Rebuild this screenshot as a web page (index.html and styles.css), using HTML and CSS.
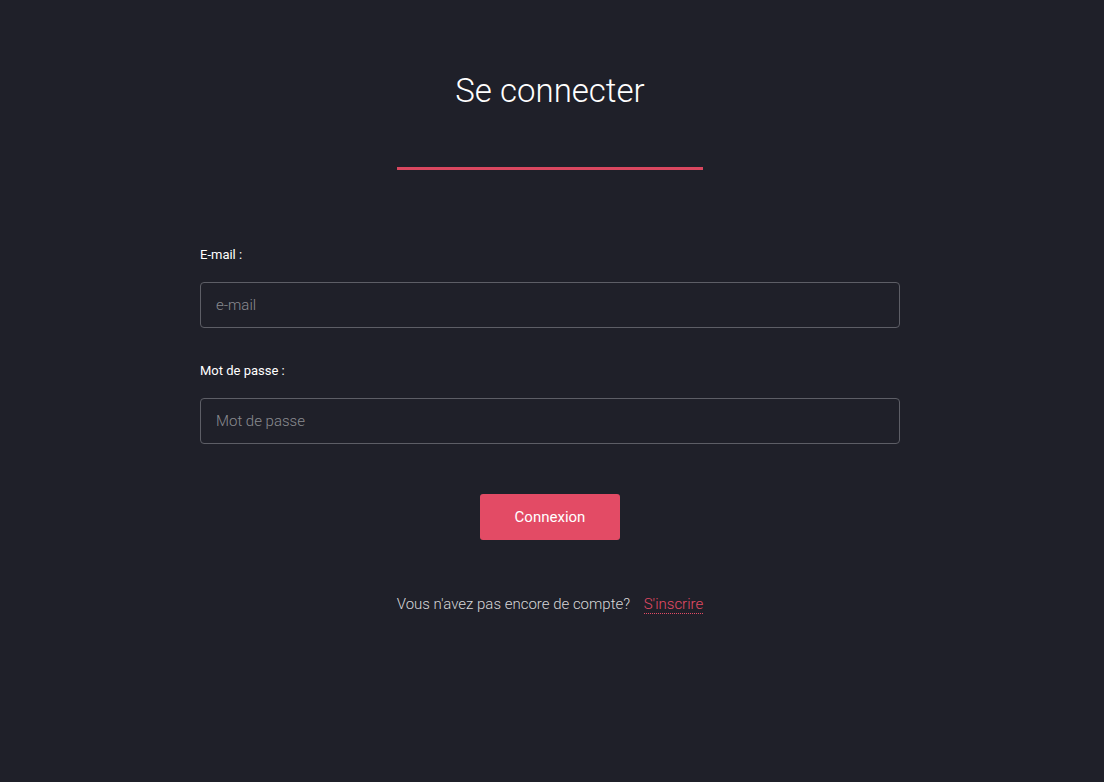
FILE: index.html
```html
<!DOCTYPE html>
<html lang="fr">
<head>
<meta charset="utf-8">
<title>Se connecter</title>
<link rel="stylesheet" href="styles.css">
</head>
<body>
<main class="page">
  <h1 class="title">Se connecter</h1>
  <div class="divider"></div>
  <form class="form">
    <div class="field">
      <label class="label" for="email">E-mail :</label>
      <input class="input" id="email" type="text" placeholder="e-mail">
    </div>
    <div class="field">
      <label class="label" for="pwd">Mot de passe :</label>
      <input class="input" id="pwd" type="password" placeholder="Mot de passe">
    </div>
    <div class="actions">
      <button class="btn" type="button">Connexion</button>
    </div>
  </form>
  <p class="signup">Vous n'avez pas encore de compte? <a class="signup-link" href="#">S'inscrire</a></p>
</main>
</body>
</html>
```
FILE: styles.css
```css
html, body {
  margin: 0;
  padding: 0;
  background: #1f2029;
  height: 100%;
}
body {
  font-family: Roboto, "Liberation Sans", sans-serif;
  color: #ffffff;
}
.page {
  display: flex;
  flex-direction: column;
  align-items: center;
  padding-top: 70px;
  padding-right: 4px;
}
.title {
  margin: 0;
  font-weight: 300;
  font-size: 33px;
  line-height: 42px;
  color: #ffffff;
}
.divider {
  width: 306px;
  height: 3px;
  background: #d9475f;
  margin-top: 55px;
}
.form {
  width: 700px;
  margin-top: 77px;
  display: flex;
  flex-direction: column;
}
.field {
  display: flex;
  flex-direction: column;
  margin-bottom: 35px;
}
.label {
  font-size: 13px;
  line-height: 16px;
  color: #ffffff;
  margin-bottom: 19px;
}
.input {
  box-sizing: border-box;
  height: 46px;
  width: 100%;
  background: #1f2029;
  border: 1px solid #5d5e66;
  border-radius: 4px;
  padding: 0 15px;
  font-family: Roboto, "Liberation Sans", sans-serif;
  font-weight: 300;
  font-size: 15px;
  color: #ffffff;
  outline: none;
}
.input::placeholder {
  color: #8a8b90;
}
.actions {
  display: flex;
  justify-content: center;
  margin-top: 15px;
}
.btn {
  width: 140px;
  height: 46px;
  border: none;
  border-radius: 3px;
  background: #e34b65;
  color: #ffffff;
  font-family: Roboto, "Liberation Sans", sans-serif;
  font-weight: 400;
  font-size: 15px;
  cursor: pointer;
}
.signup {
  margin: 54px 0 0;
  font-size: 15px;
  font-weight: 300;
  line-height: 20px;
  color: #d6d6d8;
}
.signup-link {
  color: #e34b65;
  text-decoration: none;
  border-bottom: 1px dotted #e34b65;
  margin-left: 10px;
}
```
